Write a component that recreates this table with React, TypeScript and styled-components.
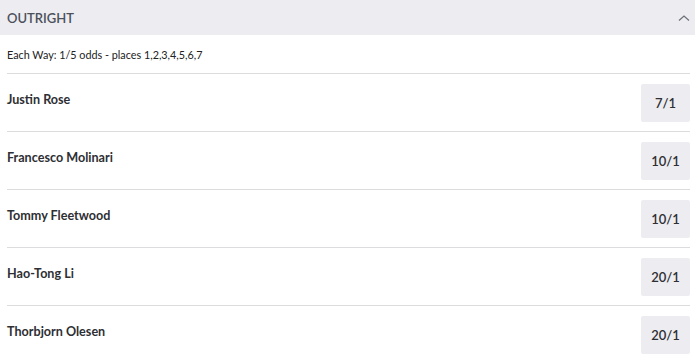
import styled, { createGlobalStyle } from "styled-components"

const GlobalStyle = createGlobalStyle`
    body {
        margin: 0;
        background: #ffffff;
        font-family: Lato, "Open Sans", sans-serif;
    }
`

const Panel = styled.div`
    width: 695px;
    display: flex;
    flex-direction: column;
`

const Header = styled.div`
    height: 35px;
    background-color: #ececf1;
    display: flex;
    align-items: center;
    justify-content: space-between;
    padding: 0 5px 0 7px;
`

const HeaderText = styled.span`
    font-size: 13px;
    font-weight: 600;
    color: #4b505a;
`

const Body = styled.div`
    padding: 0 5px 0 7px;
    display: flex;
    flex-direction: column;
`

const Terms = styled.div`
    height: 38px;
    display: flex;
    align-items: center;
    font-size: 10.8px;
    color: #222;
    border-bottom: 1px solid #dcdcdf;
`

const Row = styled.div<{ last?: boolean }>`
    height: 57px;
    display: flex;
    justify-content: space-between;
    border-bottom: ${({ last }) => (last ? "none" : "1px solid #dcdcdf")};
`

const Name = styled.span`
    padding-top: 18px;
    font-size: 12.6px;
    font-weight: 700;
    color: #2e2f33;
`

const Odds = styled.button`
    margin-top: 10px;
    width: 49px;
    height: 38px;
    border: none;
    border-radius: 2px;
    background-color: #ececf1;
    font-family: Lato, sans-serif;
    font-size: 13px;
    font-weight: 600;
    color: #2e2f33;
    padding: 0;
`

const runners = [
    { name: "Justin Rose", odds: "7/1" },
    { name: "Francesco Molinari", odds: "10/1" },
    { name: "Tommy Fleetwood", odds: "10/1" },
    { name: "Hao-Tong Li", odds: "20/1" },
    { name: "Thorbjorn Olesen", odds: "20/1" },
]

const Chevron = () => (
    <svg width="12" height="8" viewBox="0 0 12 8" fill="none">
        <path d="M1 6.5 L6 2 L11 6.5" stroke="#6b6f78" strokeWidth="1.2" />
    </svg>
)

export default function App() {
    return (
        <>
            <GlobalStyle />
            <Panel>
                <Header>
                    <HeaderText>OUTRIGHT</HeaderText>
                    <Chevron />
                </Header>
                <Body>
                    <Terms>Each Way: 1/5 odds - places 1,2,3,4,5,6,7</Terms>
                    {runners.map((r, i) => (
                        <Row key={r.name} last={i === runners.length - 1}>
                            <Name>{r.name}</Name>
                            <Odds>{r.odds}</Odds>
                        </Row>
                    ))}
                </Body>
            </Panel>
        </>
    )
}
